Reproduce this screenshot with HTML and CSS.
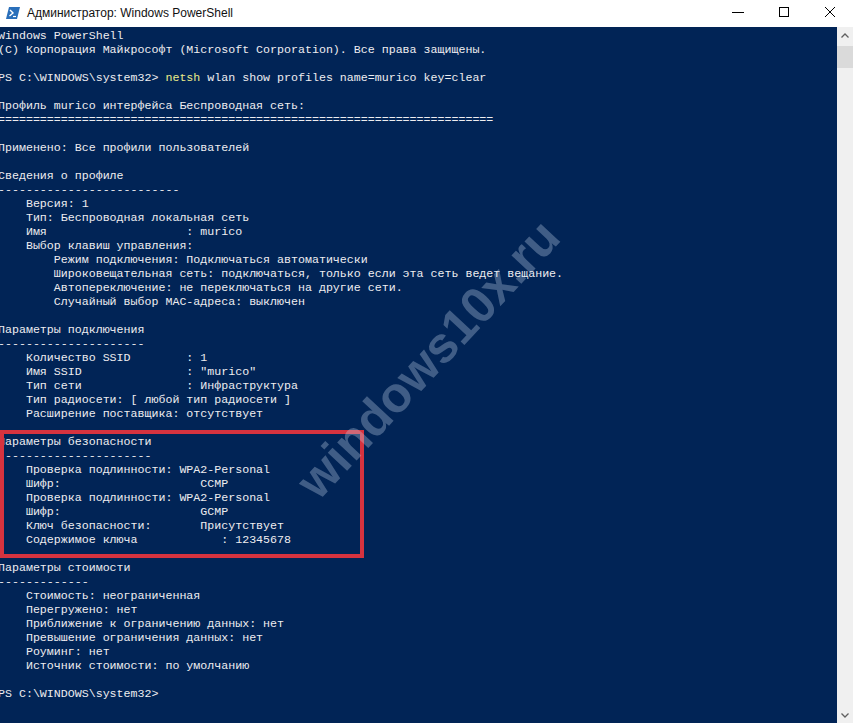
FILE: index.html
```html
<!DOCTYPE html>
<html lang="ru">
<head>
    <meta charset="UTF-8">
    <meta name="viewport" content="width=device-width, initial-scale=1.0">
    <title>Администратор: Windows PowerShell</title>
    <link rel="stylesheet" href="styles.css">
</head>
<body>
    <div class="window">
        <div class="titlebar">
            <div class="title">
                <svg class="app-icon" width="14" height="12" viewBox="0 0 14 12">
                    <polygon points="3,0 14,0 11,12 0,12" fill="#2a6fba"/>
                    <polyline points="4,3 7,6 3.5,9" fill="none" stroke="#ffffff" stroke-width="1.4"/>
                    <line x1="7" y1="9.5" x2="10" y2="9.5" stroke="#ffffff" stroke-width="1.2"/>
                </svg>
                <span class="title-text">Администратор: Windows PowerShell</span>
            </div>
            <div class="controls">
                <div class="ctrl">
                    <svg width="12" height="12" viewBox="0 0 12 12"><line x1="0" y1="6.5" x2="12" y2="6.5" stroke="#000" stroke-width="1"/></svg>
                </div>
                <div class="ctrl">
                    <svg width="12" height="12" viewBox="0 0 12 12"><rect x="1.5" y="1.5" width="9" height="9" fill="none" stroke="#000" stroke-width="1"/></svg>
                </div>
                <div class="ctrl">
                    <svg width="12" height="12" viewBox="0 0 12 12"><path d="M1 1 L11 11 M11 1 L1 11" stroke="#000" stroke-width="1" fill="none"/></svg>
                </div>
            </div>
        </div>

        <div class="console">
            <div class="screen">
                <div class="ln">Windows PowerShell</div>
                <div class="ln">(C) Корпорация Майкрософт (Microsoft Corporation). Все права защищены.</div>
                <div class="ln"></div>
                <div class="ln">PS C:\WINDOWS\system32&gt; <span class="cmd">netsh</span> wlan show profiles name=murico key=clear</div>
                <div class="ln"></div>
                <div class="ln">Профиль murico интерфейса Беспроводная сеть:</div>
                <div class="ln">=======================================================================</div>
                <div class="ln"></div>
                <div class="ln">Применено: Все профили пользователей</div>
                <div class="ln"></div>
                <div class="ln">Сведения о профиле</div>
                <div class="ln">--------------------------</div>
                <div class="ln">    Версия: 1</div>
                <div class="ln">    Тип: Беспроводная локальная сеть</div>
                <div class="ln">    Имя                    : murico</div>
                <div class="ln">    Выбор клавиш управления:</div>
                <div class="ln">        Режим подключения: Подключаться автоматически</div>
                <div class="ln">        Широковещательная сеть: подключаться, только если эта сеть ведет вещание.</div>
                <div class="ln">        Автопереключение: не переключаться на другие сети.</div>
                <div class="ln">        Случайный выбор MAC-адреса: выключен</div>
                <div class="ln"></div>
                <div class="ln">Параметры подключения</div>
                <div class="ln">---------------------</div>
                <div class="ln">    Количество SSID        : 1</div>
                <div class="ln">    Имя SSID               : "murico"</div>
                <div class="ln">    Тип сети               : Инфраструктура</div>
                <div class="ln">    Тип радиосети: [ любой тип радиосети ]</div>
                <div class="ln">    Расширение поставщика: отсутствует</div>
                <div class="ln"></div>
                <div class="secure">
                    <div class="ln">Параметры безопасности</div>
                    <div class="ln">----------------------</div>
                    <div class="ln">    Проверка подлинности: WPA2-Personal</div>
                    <div class="ln">    Шифр:                    CCMP</div>
                    <div class="ln">    Проверка подлинности: WPA2-Personal</div>
                    <div class="ln">    Шифр:                    GCMP</div>
                    <div class="ln">    Ключ безопасности:       Присутствует</div>
                    <div class="ln">    Содержимое ключа            : 12345678</div>
                </div>
                <div class="ln"></div>
                <div class="ln">Параметры стоимости</div>
                <div class="ln">-------------</div>
                <div class="ln">    Стоимость: неограниченная</div>
                <div class="ln">    Перегружено: нет</div>
                <div class="ln">    Приближение к ограничению данных: нет</div>
                <div class="ln">    Превышение ограничения данных: нет</div>
                <div class="ln">    Роуминг: нет</div>
                <div class="ln">    Источник стоимости: по умолчанию</div>
                <div class="ln"></div>
                <div class="ln">PS C:\WINDOWS\system32&gt;</div>
            </div>

            <div class="scrollbar">
                <svg class="arrow" width="8" height="5" viewBox="0 0 8 5"><polyline points="0.5,4.5 4,1 7.5,4.5" fill="none" stroke="#606060" stroke-width="1.3"/></svg>
                <div class="track">
                    <div class="thumb"></div>
                </div>
                <svg class="arrow" width="8" height="5" viewBox="0 0 8 5"><polyline points="0.5,0.5 4,4 7.5,0.5" fill="none" stroke="#606060" stroke-width="1.3"/></svg>
            </div>

            <div class="watermark">windows10x.ru</div>
        </div>
    </div>
</body>
</html>
```

FILE: styles.css
```css
* {
    box-sizing: border-box;
    margin: 0;
    padding: 0;
}

body {
    width: 853px;
    height: 723px;
    overflow: hidden;
    background-color: #ffffff;
}

.window {
    display: flex;
    flex-direction: column;
    height: 723px;
}

.titlebar {
    height: 27px;
    display: flex;
    align-items: center;
    justify-content: space-between;
    background-color: #ffffff;
    flex-shrink: 0;
}

.title {
    display: flex;
    align-items: center;
    padding-left: 6px;
    gap: 7px;
}

.app-icon {
    display: block;
    margin-top: -1px;
}

.title-text {
    font-family: "Liberation Sans", Arial, sans-serif;
    font-size: 12px;
    color: #111111;
    margin-top: -2px;
}

.controls {
    display: flex;
    height: 100%;
}

.ctrl {
    width: 46px;
    height: 100%;
    display: flex;
    align-items: center;
    justify-content: center;
    padding-bottom: 3px;
}

.ctrl svg {
    display: block;
}

.console {
    flex: 1;
    display: flex;
    position: relative;
    overflow: hidden;
    background-color: #012456;
}

.screen {
    flex: 1;
    padding-top: 2px;
    margin-left: -2px;
    font-family: "Liberation Mono", "DejaVu Sans Mono", monospace;
    font-size: 11.64px;
    color: #eeedf0;
}

.ln {
    height: 14px;
    line-height: 14px;
    white-space: pre;
}

.cmd {
    color: #ecec8a;
}

.secure {
    position: relative;
}

/* red marker frame around the security block */
.secure::before {
    content: '';
    position: absolute;
    left: 2px;
    top: -5px;
    width: 356px;
    bottom: -11px;
    border: 4px solid #d6333f;
}

.scrollbar {
    width: 16px;
    flex-shrink: 0;
    background-color: #f0f0f0;
    display: flex;
    flex-direction: column;
    align-items: center;
    padding: 6px 0 5px;
}

.arrow {
    display: block;
    flex-shrink: 0;
}

.track {
    flex: 1;
    width: 100%;
    padding-top: 8px;
}

.thumb {
    width: 100%;
    height: 22px;
    background-color: #dadada;
}

.watermark {
    position: absolute;
    left: 428px;
    top: 332px;
    transform: translate(-50%, -50%) rotate(-47deg);
    font-family: "Liberation Sans", Arial, sans-serif;
    font-weight: bold;
    font-size: 50px;
    color: rgba(200, 215, 235, 0.32);
    white-space: nowrap;
    pointer-events: none;
}
```
